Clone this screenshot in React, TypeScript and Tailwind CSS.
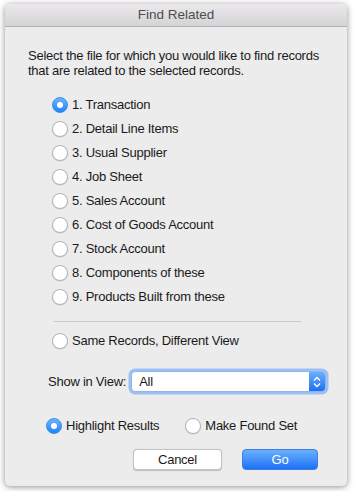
import React, { useState } from "react";

// Options listed in the dialog
const files = [
  "1. Transaction",
  "2. Detail Line Items",
  "3. Usual Supplier",
  "4. Job Sheet",
  "5. Sales Account",
  "6. Cost of Goods Account",
  "7. Stock Account",
  "8. Components of these",
  "9. Products Built from these",
];

// Aqua-style radio button
const Radio = ({ checked, label, onClick }: { checked: boolean; label: string; onClick: () => void }) => (
  <button className="flex items-center gap-[4px] h-[24px] text-left" onClick={onClick}>
    {checked ? (
      <span className="w-[16px] h-[16px] rounded-full bg-gradient-to-b from-[#6cb3fa] to-[#1a82fb] border border-[#3d8ee8] flex items-center justify-center">
        <span className="w-[6px] h-[6px] rounded-full bg-white" />
      </span>
    ) : (
      <span className="w-[16px] h-[16px] rounded-full bg-white border border-[#b4b4b4] shadow-[0_0.5px_1px_rgba(0,0,0,0.15)]" />
    )}
    <span>{label}</span>
  </button>
);

const App = () => {
  // Selected file and result mode
  const [selected, setSelected] = useState(0);
  const [mode, setMode] = useState("highlight");

  return (
    <div
      className="w-[353px] h-[491px] bg-white pt-[4px] pl-[5px] text-[13px] tracking-[-0.25px] text-[#1a1a1a]"
      style={{ fontFamily: '"Liberation Sans", Arial, sans-serif' }}
    >
      {/* Window */}
      <div className="w-[342px] h-[482px] rounded-[5px] bg-[#ececec] shadow-[0_1px_6px_rgba(0,0,0,0.45)] flex flex-col overflow-hidden">
        {/* Title bar */}
        <div className="h-[23px] shrink-0 bg-gradient-to-b from-[#ebe9eb] to-[#d5d3d5] border-b border-[#b3b3b3] flex items-center justify-center text-[#4d4d4d] text-[13.5px] tracking-normal">
          Find Related
        </div>

        {/* Content */}
        <div className="flex flex-col pl-[23px] pr-[20px] pt-[21px]">
          <p className="leading-[15px]">
            Select the file for which you would like to find records that are related to the selected records.
          </p>

          {/* File list */}
          <div className="flex flex-col pl-[24px] pt-[15px]">
            {files.map((file, i) => (
              <Radio key={file} checked={selected === i} label={file} onClick={() => setSelected(i)} />
            ))}
          </div>

          <div className="ml-[26px] mr-[26px] mt-[12px] mb-[7px] h-px bg-[#c7c7c7]" />

          <div className="pl-[24px]">
            <Radio checked={selected === 9} label="Same Records, Different View" onClick={() => setSelected(9)} />
          </div>

          {/* Show in view */}
          <div className="flex items-center gap-[5px] mt-[18px] pl-[20px] pr-[1px]">
            <span>Show in View:</span>
            <div className="flex-1 h-[21px] rounded-[4px] bg-white border border-[#8db4ee] shadow-[0_0_0_2.5px_#9bc0f4] flex items-center justify-between">
              <span className="pl-[7px]">All</span>
              <span className="w-[16px] h-[19px] rounded-r-[3px] bg-gradient-to-b from-[#6aaefb] to-[#1e6ff5] flex items-center justify-center">
                <svg width="8" height="12" viewBox="0 0 8 12" fill="none" stroke="white" strokeWidth="1.4">
                  <path d="M1 4.5 L4 1.5 L7 4.5" />
                  <path d="M1 7.5 L4 10.5 L7 7.5" />
                </svg>
              </span>
            </div>
          </div>

          {/* Result mode */}
          <div className="flex items-center gap-[26px] mt-[22px] pl-[18px]">
            <Radio checked={mode === "highlight"} label="Highlight Results" onClick={() => setMode("highlight")} />
            <Radio checked={mode === "found"} label="Make Found Set" onClick={() => setMode("found")} />
          </div>

          {/* Buttons */}
          <div className="flex justify-end gap-[20px] mt-[11px] pr-[9px]">
            <button className="w-[89px] h-[21px] rounded-[4px] bg-white border border-[#c2c2c2] shadow-[0_0.5px_1px_rgba(0,0,0,0.2)]">
              Cancel
            </button>
            <button className="w-[76px] h-[21px] rounded-[4px] bg-gradient-to-b from-[#6bb0fb] to-[#1a6ff6] text-white border border-[#3a7ee8]">
              Go
            </button>
          </div>
        </div>
      </div>
    </div>
  );
};

export default App;
